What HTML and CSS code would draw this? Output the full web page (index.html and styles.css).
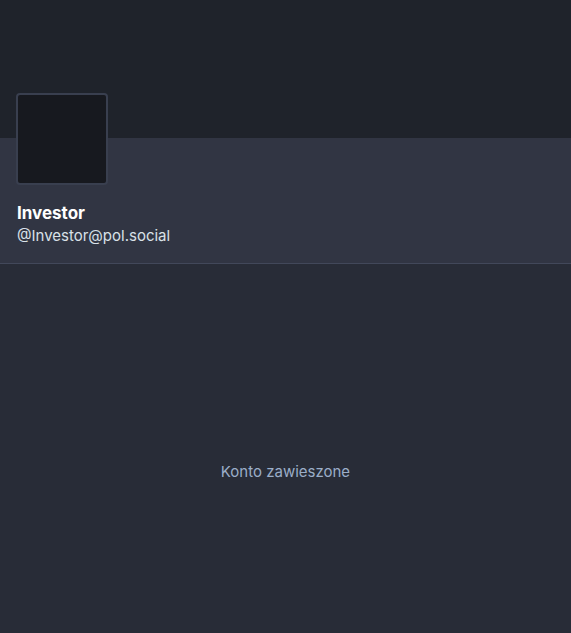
FILE: index.html
```html
<!DOCTYPE html>
<html lang="pl">
<head>
    <meta charset="UTF-8">
    <meta name="viewport" content="width=device-width, initial-scale=1.0">
    <title>Investor (@Investor@pol.social)</title>
    <link rel="stylesheet" href="styles.css">
</head>
<body>
    <div class="account">
        <div class="account-header">
            <div class="banner"></div>
            <div class="bar">
                <div class="avatar-wrap">
                    <div class="avatar"></div>
                </div>
                <div class="account-name">
                    <h1>Investor</h1>
                    <span class="acct">@Investor@pol.social</span>
                </div>
            </div>
        </div>

        <div class="empty-column">
            Konto zawieszone
        </div>
    </div>
</body>
</html>
```

FILE: styles.css
```css
/* Reset default styles */
* {
    margin: 0;
    padding: 0;
    box-sizing: border-box;
}

body {
    font-family: 'Inter', 'Roboto', sans-serif;
    background: #282c37;
    color: #fff;
    width: 571px;
    height: 633px;
    overflow: hidden;
}

.banner {
    height: 138px;
    background: #1f232b;
}

.bar {
    display: flex;
    flex-direction: column;
    background: #313543;
    border-bottom: 1px solid #42485a;
    padding: 0 16px 17px;
}

.avatar-wrap {
    height: 47px;
}

.avatar {
    width: 92px;
    height: 92px;
    margin-top: -45px;
    border: 2px solid #393f4f;
    border-radius: 4px;
    background: #17191f;
}

.account-name {
    padding-top: 17px;
    padding-left: 1px;
}

.account-name h1 {
    font-size: 17px;
    font-weight: 700;
    line-height: 22px;
}

.acct {
    display: block;
    margin-top: 2px;
    font-size: 15px;
    line-height: 20px;
    color: #d9e1e8;
}

.empty-column {
    padding-top: 198px;
    text-align: center;
    font-size: 15px;
    line-height: 20px;
    color: #9baec8;
}
```
